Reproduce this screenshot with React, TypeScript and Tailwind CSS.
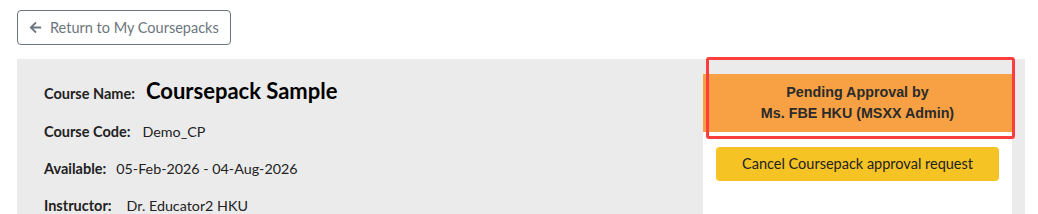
import { FaArrowLeft } from "react-icons/fa";

function InfoRow({ label, value, gap }: { label: string; value: string; gap: string }) {
  return (
    <div className="flex items-center h-[37px]">
      <div className="flex items-baseline">
        <span className="text-[14.5px] font-bold text-[#222]">{label}</span>
        <span className={`text-[14.3px] text-[#222] ${gap}`}>{value}</span>
      </div>
    </div>
  );
}

export default function App() {
  return (
    <div className="w-[1038px] h-[214px] bg-white overflow-hidden font-['Lato',sans-serif] relative">
      <div className="pt-[10px] pl-[17px]">
        <button className="flex items-center gap-[8px] h-[35px] w-[214px] pl-[11px] border border-[#6c757d] rounded-[4px] text-[#6c757d] text-[14.5px]">
          <FaArrowLeft className="w-[13px] h-[13px]" />
          Return to My Coursepacks
        </button>
      </div>

      <div className="mt-[14px] ml-[17px] w-[1008px] h-[160px] bg-[#ebebeb] flex pt-[15px]">
        <div className="flex-1 pl-[27px]">
          <div className="flex items-center h-[36px] -mt-[2px]">
            <div className="flex items-baseline">
              <span className="text-[14.5px] font-bold text-[#222]">Course Name:</span>
              <span className="text-[22px] font-bold text-black ml-[11px]">Coursepack Sample</span>
            </div>
          </div>
          <div className="h-[5px]" />
          <InfoRow label="Course Code:" value="Demo_CP" gap="ml-[12px]" />
          <InfoRow label="Available:" value="05-Feb-2026 - 04-Aug-2026" gap="ml-[10px]" />
          <InfoRow label="Instructor:" value="Dr. Educator2 HKU" gap="ml-[15px]" />
        </div>

        <div className="w-[309px] mr-[13px] bg-white">
          <div className="h-[58px] bg-[#f7a144] flex flex-col justify-center items-center text-[14.3px] leading-[21px] font-bold text-[#2b2b2b] font-['Liberation_Sans',Arial,sans-serif]">
            <span>Pending Approval by</span>
            <span>Ms. FBE HKU (MSXX Admin)</span>
          </div>
          <div className="px-[13px] pt-[15px]">
            <button className="w-full h-[34px] bg-[#f6c324] rounded-[4px] text-[14.5px] text-[#222]">
              Cancel Coursepack approval request
            </button>
          </div>
        </div>
      </div>

      <div className="absolute left-[706px] top-[57px] w-[309px] h-[82px] border-[3px] border-[#fe3d3d] rounded-[3px]" />
    </div>
  );
}
